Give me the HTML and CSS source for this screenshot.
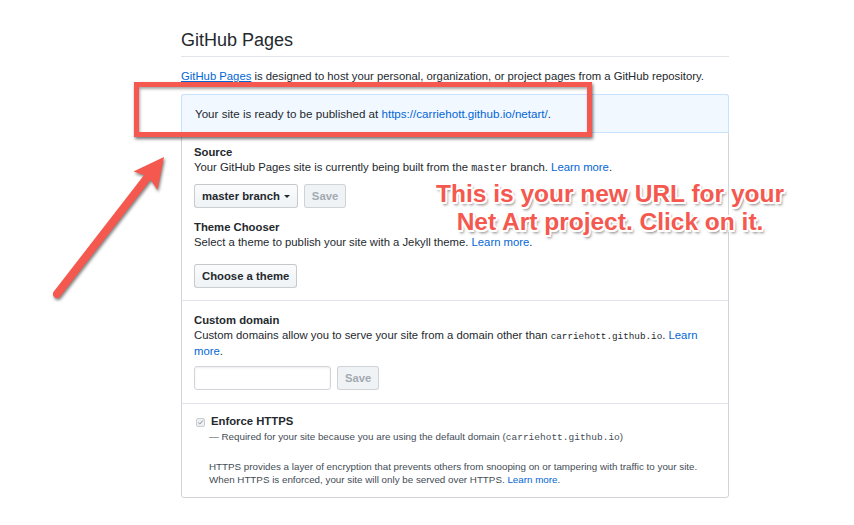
FILE: index.html
```html
<!DOCTYPE html>
<html>
<head>
<meta charset="utf-8">
<link rel="stylesheet" href="styles.css">
</head>
<body>
<div class="page">
  <h2 class="title">GitHub Pages</h2>
  <p class="intro"><a href="#">GitHub Pages</a> is designed to host your personal, organization, or project pages from a GitHub repository.</p>
  <div class="box">
    <div class="flash">Your site is ready to be published at <a href="#">https://carriehott.github.io/netart/</a>.</div>
    <div class="section s1">
      <div class="label">Source</div>
      <div class="desc">Your GitHub Pages site is currently being built from the <code>master</code> branch. <a href="#">Learn more</a>.</div>
      <div class="row">
        <button class="btn">master branch <span class="caret"></span></button>
        <button class="btn disabled">Save</button>
      </div>
      <div class="label mt">Theme Chooser</div>
      <div class="desc">Select a theme to publish your site with a Jekyll theme. <a href="#">Learn more</a>.</div>
      <div class="row row2">
        <button class="btn">Choose a theme</button>
      </div>
    </div>
    <div class="section s2">
      <div class="label">Custom domain</div>
      <div class="desc">Custom domains allow you to serve your site from a domain other than <code class="small">carriehott.github.io</code>. <a href="#">Learn more</a>.</div>
      <div class="row">
        <input class="field" type="text">
        <button class="btn disabled">Save</button>
      </div>
    </div>
    <div class="section s3">
      <div class="check-row">
        <span class="checkbox"><svg width="7" height="7" viewBox="0 0 7 7"><path d="M1.3 3.6 L2.8 5 L5.8 1.6" fill="none" stroke="#8a9099" stroke-width="1"/></svg></span>
        <span class="label">Enforce HTTPS</span>
      </div>
      <div class="note">— Required for your site because you are using the default domain (<code>carriehott.github.io</code>)</div>
      <div class="note2">HTTPS provides a layer of encryption that prevents others from snooping on or tampering with traffic to your site.<br>When HTTPS is enforced, your site will only be served over HTTPS. <a href="#">Learn more</a>.</div>
    </div>
  </div>
</div>

<div class="highlight"></div>
<svg class="arrow" width="854" height="525" viewBox="0 0 854 525">
  <g class="arrow-g">
    <line x1="57" y1="294" x2="150" y2="174" stroke="#f4584e" stroke-width="8" stroke-linecap="round"/>
    <polygon points="164,157 133.5,171.5 148.5,176.5 157.5,190" fill="#f4584e"/>
  </g>
</svg>
<div class="callout"><div>This is your new URL for your</div><div>Net Art project. Click on it.</div></div>
</body>
</html>
```
FILE: styles.css
```css
html, body {
  margin: 0;
  padding: 0;
  background: #ffffff;
}
body {
  width: 854px;
  height: 525px;
  overflow: hidden;
  position: relative;
  font-family: "Liberation Sans", Arial, sans-serif;
  color: #24292e;
  font-size: 11.3px;
  line-height: 15px;
}
a {
  color: #0366d6;
  text-decoration: none;
}
code {
  font-family: "Liberation Mono", "DejaVu Sans Mono", monospace;
  font-size: 10px;
}
code.small {
  font-size: 9.3px;
}
.page {
  margin-left: 181px;
  width: 548px;
  padding-top: 29px;
}
.title {
  margin: 0;
  font-size: 18px;
  font-weight: normal;
  line-height: 22px;
  padding-bottom: 5px;
  border-bottom: 1px solid #e1e4e8;
}
.intro {
  margin: 12px 0 10px 0;
  line-height: 15px;
}
.intro a {
  text-decoration: underline;
}
.box {
  border: 1px solid #d1d5da;
  border-radius: 3px;
}
.flash {
  background: #f1f8ff;
  border: 1px solid #c8e1ff;
  margin: -1px -1px 0 -1px;
  border-radius: 3px 3px 0 0;
  padding: 11px 12px 11px 13px;
  font-size: 11.6px;
  line-height: 15px;
}
.section {
  padding: 0 12px;
  border-top: 1px solid #e1e4e8;
}
.flash + .section {
  border-top: 0;
}
.s1 {
  padding-top: 12px;
  padding-bottom: 12px;
}
.s2 {
  padding-top: 12px;
  padding-bottom: 13px;
}
.s3 {
  padding-top: 10px;
  padding-bottom: 11px;
}
.label {
  font-weight: bold;
}
.label.mt {
  margin-top: 12px;
}
.row {
  display: flex;
  gap: 6px;
  margin-top: 8px;
}
.row2 {
  margin-top: 14px;
}
.btn {
  font-family: "Liberation Sans", Arial, sans-serif;
  font-size: 11.3px;
  font-weight: bold;
  color: #24292e;
  height: 24px;
  padding: 0 7px;
  background: linear-gradient(#fafbfc, #eff3f6);
  border: 1px solid rgba(27, 31, 35, 0.2);
  border-radius: 3px;
  display: flex;
  align-items: center;
  gap: 4px;
}
.btn.disabled {
  color: #a3aab1;
  background: #eff3f6;
  border-color: rgba(27, 31, 35, 0.15);
}
.caret {
  display: inline-block;
  width: 0;
  height: 0;
  border-left: 3px solid transparent;
  border-right: 3px solid transparent;
  border-top: 3px solid #24292e;
}
.field {
  width: 137px;
  height: 24px;
  box-sizing: border-box;
  border: 1px solid #d1d5da;
  border-radius: 3px;
  box-shadow: inset 0 1px 2px rgba(27, 31, 35, 0.075);
  margin: 0;
}
.s2 .row {
  margin-top: 7px;
}
.check-row {
  display: flex;
  align-items: center;
  gap: 6px;
  padding-left: 2px;
}
.checkbox {
  width: 7px;
  height: 7px;
  border: 1px solid #c9cdd2;
  border-radius: 2px;
  background: #eef0f2;
  display: flex;
  margin-top: 1px;
}
.checkbox svg {
  display: block;
}
.note {
  padding-left: 15px;
  font-size: 9.8px;
  color: #444d56;
}
.note code {
  font-size: 9.5px;
}
.note2 {
  padding-left: 15px;
  margin-top: 15px;
  font-size: 9.8px;
  line-height: 13px;
  color: #444d56;
}
.highlight {
  position: absolute;
  left: 134px;
  top: 82px;
  width: 448px;
  height: 45px;
  border: 5px solid #f4584e;
  box-shadow: 1px 2px 3px rgba(0, 0, 0, 0.55), inset 1px 2px 3px rgba(0, 0, 0, 0.35);
}
.arrow {
  position: absolute;
  left: 0;
  top: 0;
  pointer-events: none;
}
.arrow-g {
  filter: drop-shadow(1px 2px 1.5px rgba(0, 0, 0, 0.5));
}
.callout {
  position: absolute;
  left: 410px;
  top: 180px;
  width: 400px;
  text-align: center;
  font-family: "Liberation Sans", Arial, sans-serif;
  font-weight: bold;
  font-size: 24.5px;
  line-height: 28px;
  color: #f4584e;
  white-space: nowrap;
  text-shadow:
    -1.5px -1.5px 0 #fff, 1.5px -1.5px 0 #fff, -1.5px 1.5px 0 #fff, 1.5px 1.5px 0 #fff,
    0 -2px 0 #fff, 0 2px 0 #fff, -2px 0 0 #fff, 2px 0 0 #fff,
    2px 3px 3px rgba(0, 0, 0, 0.55);
}
```
